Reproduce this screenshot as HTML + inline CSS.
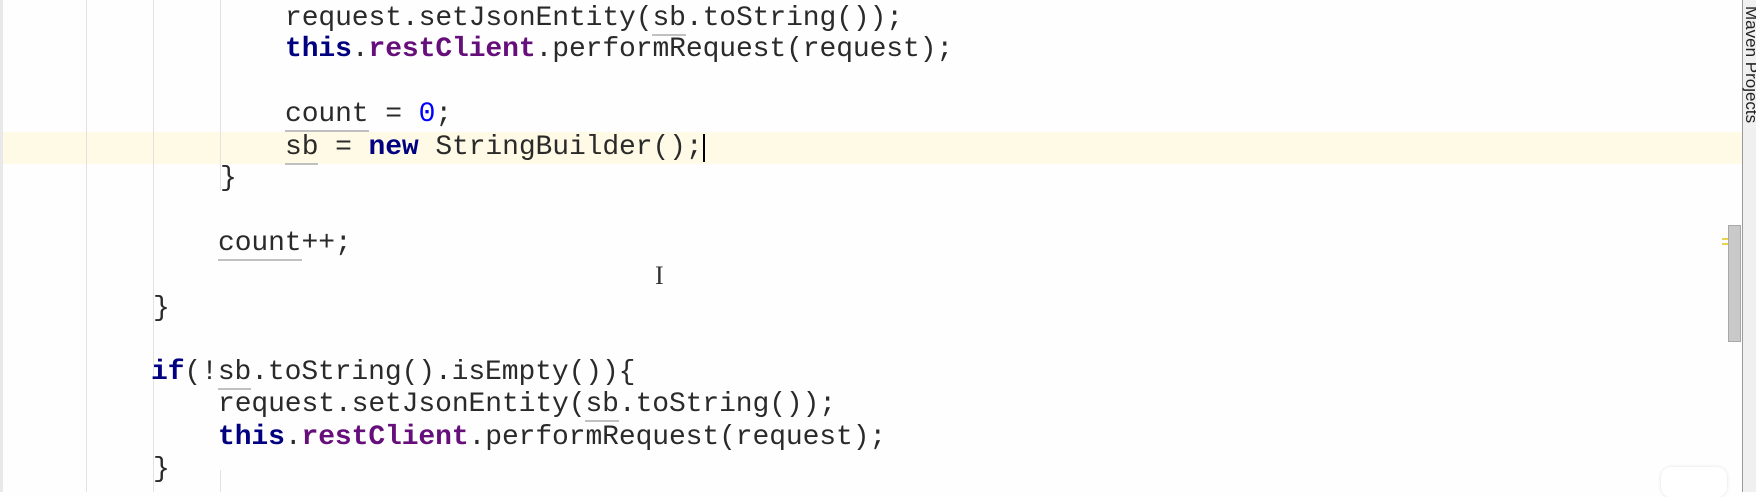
<!DOCTYPE html>
<html><head><meta charset="utf-8"><style>
html,body{margin:0;padding:0}
body{width:1756px;height:492px;position:relative;overflow:hidden;background:#fefefe;font-family:"Liberation Mono",monospace}
.g{position:absolute;top:0;width:1px;height:492px;background:#e2e2e2}
.l{position:absolute;font-size:28px;letter-spacing:-0.1px;color:#2a2a2a;white-space:pre;line-height:32px;height:32px}
.k{color:#000080;font-weight:bold}
.f{color:#660e7a;font-weight:bold}
.n{color:#0000ff}
.u{border-bottom:2px solid #c0c0c0}
</style></head><body>
<div style="position:absolute;left:0;top:0;width:3px;height:492px;background:#e8e8e8"></div>
<div style="position:absolute;left:3px;top:132px;width:1739px;height:32px;background:#fffae5"></div>
<div class="g" style="left:86px"></div>
<div class="g" style="left:153px"></div>
<div class="g" style="left:220px;height:190px"></div>
<div class="g" style="left:220px;top:470px;height:22px"></div>
<div class="l" style="left:285px;top:3px">request.setJsonEntity(<span class="u">sb</span>.toString());</div>
<div class="l" style="left:285px;top:34px"><span class="k">this</span>.<span class="f">restClient</span>.performRequest(request);</div>
<div class="l" style="left:285px;top:99px"><span class="u">count</span> = <span class="n">0</span>;</div>
<div class="l" style="left:285px;top:132px"><span class="u">sb</span> = <span class="k">new</span> StringBuilder();</div>
<div style="position:absolute;left:703px;top:134px;width:2px;height:28px;background:#000"></div>
<div class="l" style="left:220px;top:163px">}</div>
<div class="l" style="left:218px;top:228px"><span class="u">count</span>++;</div>
<div class="l" style="left:153px;top:293px">}</div>
<div class="l" style="left:151px;top:357px"><span class="k">if</span>(!<span class="u">sb</span>.toString().isEmpty()){</div>
<div class="l" style="left:218px;top:389px">request.setJsonEntity(<span class="u">sb</span>.toString());</div>
<div class="l" style="left:218px;top:422px"><span class="k">this</span>.<span class="f">restClient</span>.performRequest(request);</div>
<div class="l" style="left:153px;top:454px">}</div>
<div style="position:absolute;left:655px;top:261px;font-family:'Liberation Serif',serif;font-size:26px;color:#333">I</div>
<div style="position:absolute;left:1742px;top:0;width:1px;height:492px;background:#9a9a9a"></div>
<div style="position:absolute;left:1743px;top:0;width:13px;height:492px;background:#f0f0f0"></div>
<div style="position:absolute;left:1744px;top:6px;transform-origin:0 0;transform:translate(17px,0) rotate(90deg);font-family:'Liberation Sans',sans-serif;font-size:17px;color:#222;white-space:nowrap">Maven Projects</div>
<div style="position:absolute;left:1728px;top:225px;width:13px;height:117px;background:#c9c9c9;border:1px solid #a8a8a8;box-sizing:border-box"></div>
<div style="position:absolute;left:1722px;top:238px;width:6px;height:2px;background:#e8d44d"></div>
<div style="position:absolute;left:1722px;top:243px;width:6px;height:2px;background:#e8d44d"></div>
<div style="position:absolute;left:1661px;top:467px;width:66px;height:30px;border-radius:10px;background:#fff;box-shadow:0 0 3px #e0e0e0"></div>
</body></html>
